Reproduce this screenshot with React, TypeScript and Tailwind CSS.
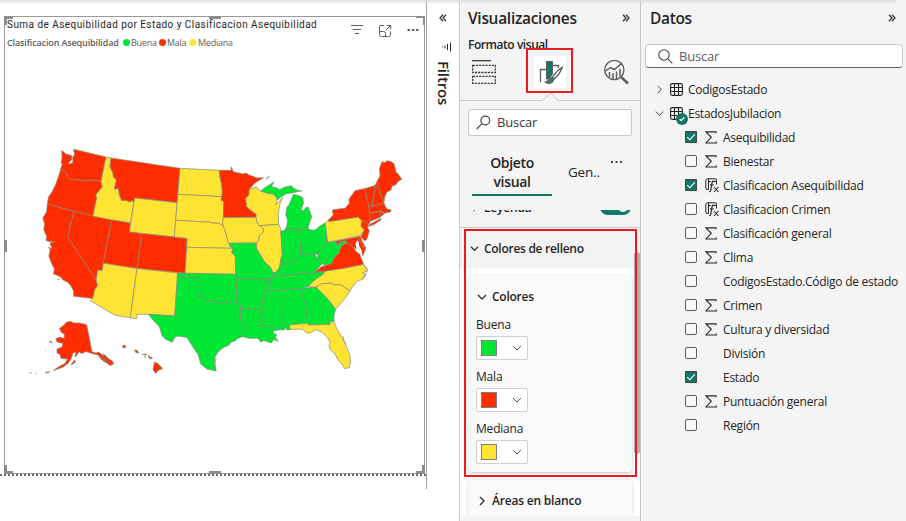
import React from "react";

const RED = "#ff2d00";
const GREEN = "#00e635";
const YELLOW = "#ffe433";

type Shape = { id: string; fill: string; d: string };

const STATES: Shape[] = [
  { id: "WA", fill: RED, d: "M61.7 150.5L66 154L71.5 155.5L71.5 160L68.5 163L69.5 164.5L73 162L72.5 157L74.5 155L73.7 149.2L106 157L101 181.7L97 180.6L90 180L84 180.8L76.5 179.6L71 179.5L67.5 178L66.3 173L63 170.5L60.7 168.5L62.5 164L61 163L62 158Z" },
  { id: "OR", fill: RED, d: "M60.7 168.5L63 170.5L66.3 173L67.5 178L71 179.5L76.5 179.6L84 180.8L90 180L97 180.6L101 181.7L102.3 186.7L99 191L95.7 195L97 198L96.3 200L93 216.3L73.7 211.3L47.3 204L48.5 197L52 192L55.5 185L58.3 176.7L60 172Z" },
  { id: "CA", fill: RED, d: "M47.3 204L73.7 211.3L67.7 237L96.3 280L97.7 285.7L95 289L94 293L92.7 298.5L73.7 296.3L73.5 291L71 286L67.5 282L63 280L60 276.5L53.5 274L54.3 269L51 262L48.8 256L50.3 250L48.5 247L52 249L50 243L54.5 242L49 241.5L46.2 240.5L46.5 236L43.8 230L44.5 224L42.8 218L46.5 212Z" },
  { id: "NV", fill: RED, d: "M73.7 211.3L111.7 220L103.3 263.3L102.3 270.7L97.7 270L97 275L96.3 280L67.7 237Z" },
  { id: "ID", fill: YELLOW, d: "M106 157L111 158L110 166.7L113 173L113.5 177L116.5 180L114.3 189L118.3 188.5L119.5 195L121.7 200.5L126.5 200.3L129 202L132 200.7L134 201.5L130.3 223L93 216.3L96.3 200L97 198L95.7 195L99 191L102.3 186.7L101 181.7Z" },
  { id: "MT", fill: RED, d: "M111 158L180 168.3L177 202.7L134.7 198L134 201.5L132 200.7L129 202L126.5 200.3L121.7 200.5L119.5 195L118.3 188.5L114.3 189L116.5 180L113.5 177L113 173L110 166.7Z" },
  { id: "WY", fill: YELLOW, d: "M134.7 198L177 202.7L174.3 237L129.3 232Z" },
  { id: "UT", fill: RED, d: "M111.7 220L130.3 223L129.3 232L141.7 233.6L137 268.5L103.3 263.3Z" },
  { id: "CO", fill: RED, d: "M141.7 233.6L187 238.3L185 273.3L137 268.5Z" },
  { id: "AZ", fill: YELLOW, d: "M103.3 263.3L137 268.5L130.3 317.7L115.3 315.3L90.3 300.7L92.7 298.5L94 293L95 289L97.7 285.7L96.3 280L97.7 270L102.3 270.7Z" },
  { id: "NM", fill: YELLOW, d: "M137 268.5L177.7 273L174.7 316L148.3 314.3L136.7 314.3L136.7 318.7L130.3 317.7Z" },
  { id: "ND", fill: YELLOW, d: "M180 168.3L219.3 170.3L220 176.7L221.5 184L222.3 190L222 196.7L178 194.3Z" },
  { id: "SD", fill: YELLOW, d: "M178 194.3L222 196.7L221 200L223.7 201.7L223.3 217.7L222.7 221.7L223.3 226L219.3 223.7L215 222.7L213 223.5L210.7 222.3L175.7 220.3Z" },
  { id: "NE", fill: YELLOW, d: "M175.7 220.3L210.7 222.3L213 223.5L215 222.7L219.3 223.7L223.3 226L226 233.3L228 241.7L230.7 248.3L187 247.3L187 238.3L174.3 237Z" },
  { id: "KS", fill: YELLOW, d: "M187 247.3L230.7 248.3L232.7 250L231.7 252.7L235.3 256L235.7 274.3L185 273.3Z" },
  { id: "OK", fill: GREEN, d: "M177.7 273.1L185 273.3L235.7 274.3L236 279.3L237.3 303.3L230 302L226 303.3L221.7 302.3L217 303L213.3 301.6L206.7 300.5L202 297L197.7 295L197.7 278.3L177.4 277.3Z" },
  { id: "TX", fill: GREEN, d: "M177.4 277.3L197.7 278.3L197.7 295L202 297L206.7 300.5L213.3 301.6L217 303L221.7 302.3L226 303.3L230 302L237.3 303.3L240.7 304.3L240.7 319L244.3 327.3L242.7 336.7L237 338.7L235 341L231 342L229 345L223.5 347.5L218 352L215 357L214.3 362L216 371L207 369L200.7 364L198.3 355L192.7 346.7L187 337.5L178 336L175 337L172.3 342.3L166 339.5L162.3 336L159.3 326.7L153 320L148.3 314.3L174.7 316Z" },
  { id: "MN", fill: RED, d: "M219.3 170.3L231 170.3L231.3 166.8L233.3 171.7L239 173L243 174L246 173L249 175L252 176L257 178L263.5 177.7L255 183L249.3 189.3L249 195L245.7 198.3L246.7 206.7L251 210.5L256 214L256 217.3L223.3 217.7L223.7 201.7L221 200L222 196.7L222.3 190L221.5 184L220 176.7Z" },
  { id: "IA", fill: YELLOW, d: "M223.3 217.7L256 217.3L256.7 222L259.3 225.7L263.3 228.5L263.5 232L259 236L259 240L256.7 243L229.3 243.3L228 241.7L226 233.3L223.3 226L222.7 221.7Z" },
  { id: "MO", fill: GREEN, d: "M229.3 243.3L256.7 243L256.5 248L260 254L263.3 260L266 263L270.7 267.3L273.3 273L271.7 277.3L270 282.7L266 283L268 278.4L236 279.3L235.3 256L231.7 252.7L232.7 250Z" },
  { id: "AR", fill: GREEN, d: "M236 279.3L268 278.4L266 283L270 282.7L268 288L265 294L262.7 300L261.7 309.3L241 309.3L240.7 304.3L237.3 303.3Z" },
  { id: "LA", fill: GREEN, d: "M241 309.3L261.7 309.3L262.3 315L259 326L272.7 326L274 330.7L273 333L277 335L275 337L278.6 341.5L274 339.5L271 343L267 341.5L264 340.5L261 342L257.5 338L250 338.4L242.7 336.7L244.3 327.3L240.9 319Z" },
  { id: "WI", fill: YELLOW, d: "M249.3 189.3L256.7 187L258 189.5L260.7 191L267 193L273 194L276 197L277 201L275.5 205L279 201.5L282.7 197.5L280 204L278.3 214L278.7 224.3L259.3 225.7L256.7 222L256 214L251 210.5L246.7 206.7L245.7 198.3L249 195Z" },
  { id: "IL", fill: YELLOW, d: "M259.3 225.7L278.7 224.3L280.7 229L282.3 255L280.5 261L279 268.3L276 272L273.3 273L270.7 267.3L266 263L263.3 260L260 254L256.5 248L256.7 243L259 240L259 236L263.5 232L263.3 228.5Z" },
  { id: "MIU", fill: GREEN, d: "M260.7 191L265 187.5L270 184.5L274 181.7L271.5 186.5L275.5 187.5L280 189.5L285 187L291.7 185.8L293 188L297 190L301.7 191L296 192L292 193L287 193.5L283.3 195.5L279.5 198L278 200L276 197L273 194L267 193Z" },
  { id: "MI", fill: GREEN, d: "M285 230L287 225L287.5 220L285.8 215L286.5 208L289.5 204L291 200L293.3 194.5L297 195L302.7 197.5L303.5 203L301 209.5L303 211L306 207.5L308.5 207.5L311.7 216.7L309.8 222L308 228.5L298.7 229Z" },
  { id: "IN", fill: GREEN, d: "M280.7 231.2L285 230L298.7 229L301 253.5L297 257L293 262L289 263L284 264L280.5 264.5L280.5 261L282.3 255Z" },
  { id: "OH", fill: GREEN, d: "M298.7 229L308 228.5L311 230L315 230L320 226L325.3 222.9L327.3 236.7L326 244L320 250.5L318 255L315 253.5L309 255L305 255L301 253.5Z" },
  { id: "KY", fill: GREEN, d: "M301 253.5L305 255L309 255L315 253.5L317 259L321.7 264L315 272.3L280 275.7L271.7 277.3L273.3 273L276 272L279 268.3L280.5 264.5L284 264L289 263L293 262L297 257Z" },
  { id: "TN", fill: GREEN, d: "M271.7 277.3L280 275.7L315 272.3L325.7 271L323 274.5L316.7 278.5L312 282.5L308.3 286.7L300.7 288.5L267 291.3L268 288L270 282.7Z" },
  { id: "MS", fill: GREEN, d: "M267 291.3L281.7 290.3L282 329.8L278 330L274 330.7L272.7 326L259 326L262.3 315L261.7 309.3L262.7 300L265 294Z" },
  { id: "AL", fill: GREEN, d: "M281.7 290.3L300.7 288.5L304.5 302L306.5 310L307.7 323.3L289 325L290.5 329.5L287 330L285.5 327L284.5 330L282 329.8Z" },
  { id: "GA", fill: GREEN, d: "M300.7 288.5L316 287.1L320 291L326.7 297.5L331 303L335.7 309.3L334 315L334 321.7L330 321.8L330 324.5L308.5 325L307.7 323.3L306.5 310L304.5 302Z" },
  { id: "FL", fill: YELLOW, d: "M289 325L307.7 323.3L308.5 325L330 324.5L330 321.8L334 321.7L336.5 328L341 336L343.5 340L346 346L350 355L350.5 362L349.3 367.7L344.3 368.5L342 364L338 360L335 354L330.5 350L329 346L330 342L327 337L321.7 332L316 329.5L311 332.5L306.7 333.3L304 330L300 329L290.5 329.5Z" },
  { id: "SC", fill: YELLOW, d: "M316 287.1L321.7 283.6L331.7 283L333.5 284.6L340.7 284.7L350 290.7L346 297L341 303L335.7 309.3L331 303L326.7 297.5L320 291Z" },
  { id: "NC", fill: YELLOW, d: "M325.7 271L345 268L363.5 264.3L367.3 270.7L362 273L366 274.5L362.5 279.5L357 281L353 286L350 290.7L340.7 284.7L333.5 284.6L331.7 283L321.7 283.6L316 287.1L308.3 286.7L312 282.5L316.7 278.5L323 274.5Z" },
  { id: "VA", fill: RED, d: "M315 272.3L321.7 266.5L327 265L331.7 263L335 256L339 253L340.5 247L346 242L350 244.5L354 248L356 251.5L360 254L361 258L362.5 261L363.5 264.3L345 268L325.7 271Z" },
  { id: "WV", fill: GREEN, d: "M327 238L327.7 242.3L336 241L337.3 245L341 241.5L346 240.7L347.3 243.3L343 244L340.5 247L339 253L335 256L331.7 263L327 265L321.7 264L317 259L318 255L320 250.5L326 244Z" },
  { id: "MD", fill: RED, d: "M336 241L358.5 236.7L361.7 243L362.5 247L366 247L365 251L362.5 256L360 250L358 244L357 240L356 243L357 249L353 247L350 244.5L347.3 243.3L346 240.7L341 241.5L337.3 245Z" },
  { id: "DE", fill: RED, d: "M358.5 236.7L360.5 236L361.5 240L365 246.7L362.5 247Z" },
  { id: "PA", fill: YELLOW, d: "M325.3 222.9L328.3 220L329 221.5L358.3 217L362 220.7L361 226L364.3 230L360.5 235.5L327.7 242.3Z" },
  { id: "NJ", fill: RED, d: "M362 220.7L368.5 223L367.5 227L369.3 231L366.7 239.5L364.5 241L361 236.5L364.3 230L361 226Z" },
  { id: "NY", fill: RED, d: "M328.3 220L333.3 215L332.3 210L340 208.8L345 208.3L349.3 203.3L349 199L355 190.7L365 188.5L366.7 198.3L369 206.5L369.5 214L370 222L369 224.2L362 220.7L358.3 217L329 221.5Z" },
  { id: "LI", fill: RED, d: "M368.8 225L375 221.5L380.7 218.3L379 221L381.5 219.5L374 224.5L368.5 226.5Z" },
  { id: "VT", fill: RED, d: "M365 188.5L375 185.5L375 191L373 199L372.5 206L369 206.5L366.7 198.3Z" },
  { id: "NH", fill: RED, d: "M375 185.5L376.7 182.3L380.5 194L384 201.5L382 204L372.5 206L373 199L375 191Z" },
  { id: "ME", fill: RED, d: "M376.7 182.3L380 176L379.5 168.5L382 161.7L384.5 162.5L387.5 160.7L391 161.5L394 163.5L396 172L398.5 174.5L401.7 179.3L398 181.5L395.5 185L392 186L391 190L387 192L385 196L384 201.5L380.5 194Z" },
  { id: "MA", fill: RED, d: "M369 206.5L382 204L384 202.5L385 206L387 209L391 209.8L390.5 212L387 212.5L385 213.5L381.5 211L369.5 213.5Z" },
  { id: "CT", fill: RED, d: "M369.5 213.5L380 211.5L380.5 217L370 221.5Z" },
  { id: "RI", fill: RED, d: "M380 211.5L381.5 211L384 214L380.5 217Z" },
  { id: "AK", fill: RED, d: "M59.5 328.5L64 325L66 322.5L70 321.3L74 323L80 323L86.7 324.8L92 351.8L96 353L99 352L102 355L105 355L109 359L112.5 361L113.5 364L110 365.5L107 363L104 361.5L101 359L98 355L92 353.5L86 351.5L82 353.5L79 352L76.5 355.5L75 357L76 352L73 353L71 359L68 363.5L63 367L58 369L53.5 370.5L59 366.5L65 363.5L67.5 359L61 358.5L60 354.5L57 353L57 349L62 347L63 343.5L57 342L56 338.5L60 337L64 338.5L64.5 334.5L61 332Z" },
  { id: "AK2", fill: RED, d: "M71 364.5L74.5 360L75.5 362L73 364Z M49 341L52 342L51.5 343.2Z M45.5 372.2L50 371.7L46 373.2Z M35 373.5L36.5 373.5 M29 373L32 373 M45 350L46 350.5" },
  { id: "HI", fill: RED, d: "M122 346.8L124 345L126 346L125 347.8L123 347.8Z M134.5 350L137 350.3L139 353L136 352.8Z M142 354.5L146 354L147 355Z M144.5 356L146 357.5L145 357Z M148 355.5L150.5 357L152.5 358L150 359Z M154.5 362L158 363.5L162.5 368.5L158 370.5L155.5 373.5L153 369.5Z" },
  { id: "IR", fill: GREEN, d: "M266 179L269.5 176L268 178Z" },
  { id: "CI", fill: RED, d: "M57 279.2L60 279.5 M367.8 205L368.5 205.5" },
  { id: "KEYS", fill: "none", d: "M216 371.5L215 365L216 358 M363.5 264.3L368 270L362.5 278.5 M343 336L344 341L346.5 344.5 M101 353.5L107 362 M103 353L110 363 M99 355L108 364 M104 357L101 359" },
];

function UsMap() {
  return (
    <svg className="block" width="419" height="396" viewBox="5 53 419 396">
      {STATES.map((s) => (
        <path key={s.id} d={s.d} fill={s.fill} stroke="#8c8a78" strokeWidth="0.7" strokeLinejoin="round" />
      ))}
      <path d="M357.5 241L358.5 246L361 251L361.5 256M356 243.5L357.5 248.5M358.5 252L362 254" fill="none" stroke="#fff" strokeWidth="1.5" />
    </svg>
  );
}

function Chevron({ dir, size = 10, color = "#333", w = 1.2 }: { dir: "down" | "right"; size?: number; color?: string; w?: number }) {
  return (
    <svg width={size} height={size} viewBox="0 0 10 10" fill="none" stroke={color} strokeWidth={w} className="shrink-0">
      <path d={dir === "down" ? "M1 3L5 7L9 3" : "M3 1L7 5L3 9"} />
    </svg>
  );
}

function DoubleChevron({ left = false }: { left?: boolean }) {
  return (
    <svg width="8" height="8" viewBox="0 0 8 8" fill="none" stroke="#3a3a3a" strokeWidth="1.3" className={left ? "rotate-180" : ""}>
      <path d="M1 .7L4 4L1 7.3M4 .7L7 4L4 7.3" />
    </svg>
  );
}

function TableIcon() {
  return (
    <svg width="13" height="13" viewBox="0 0 13 13" fill="none" stroke="#252423" strokeWidth="1.1">
      <rect x=".6" y=".6" width="11.8" height="11.8" rx="1.8" />
      <path d="M.6 4.5H12.4M.6 8.5H12.4M4.5 .6V12.4M8.5 .6V12.4" />
    </svg>
  );
}

function Sigma() {
  return (
    <svg width="12" height="13" viewBox="0 0 12 13" fill="none" stroke="#252423" strokeWidth="1.1">
      <path d="M11 2.3V.9H1L6.3 6.3L1 12H11.3V10.5" />
    </svg>
  );
}

function FxIcon() {
  return (
    <svg width="15" height="15" viewBox="0 0 15 15" fill="none" stroke="#252423" strokeWidth="1">
      <path d="M4 11.5H2.3Q.8 11.5 .8 10V2.3Q.8 .8 2.3 .8H10Q11.5 .8 11.5 2.3V6.5M3.5 .8V11.5M3.5 3.5H6M8 3.5H11.5" />
      <path d="M9 3.3Q7.4 2.8 7 5L5.8 12Q5.5 14 4 13.7M4.8 7H8.8" strokeWidth="1.2" />
      <path d="M9 9L13.5 14M13.5 9L9 14" strokeWidth="1.1" />
    </svg>
  );
}

function Check({ on }: { on?: boolean }) {
  return on ? (
    <span className="-mt-px flex size-3 items-center justify-center rounded-[1px] bg-[#117865] outline outline-1 -outline-offset-1 outline-[#444]">
      <svg width="10" height="10" viewBox="0 0 10 10" fill="none" stroke="#fff" strokeWidth="1.1">
        <path d="M1.2 5.2L3.8 7.7L8.8 2.4" />
      </svg>
    </span>
  ) : (
    <span className="-mt-px size-3 rounded-[2px] border border-[#5c5c5c] bg-[#f8f8f8]" />
  );
}

type Field = { name: string; icon?: "sum" | "fx"; on?: boolean };
const FIELDS: Field[] = [
  { name: "Asequibilidad", icon: "sum", on: true },
  { name: "Bienestar", icon: "sum" },
  { name: "Clasificacion Asequibilidad", icon: "fx", on: true },
  { name: "Clasificacion Crimen", icon: "fx" },
  { name: "Clasificación general", icon: "sum" },
  { name: "Clima", icon: "sum" },
  { name: "CodigosEstado.Código de estado" },
  { name: "Crimen", icon: "sum" },
  { name: "Cultura y diversidad", icon: "sum" },
  { name: "División" },
  { name: "Estado", on: true },
  { name: "Puntuación general", icon: "sum" },
  { name: "Región" },
];

const HANDLES = [
  "left-[-1px] top-[-1px] h-[3px] w-[9px]",
  "left-[-1px] top-[-1px] h-[9px] w-[3px]",
  "left-[204px] top-[-1px] h-[3px] w-[12px]",
  "right-[-1px] top-[-1px] h-[2px] w-[9px]",
  "right-[-1px] top-[-1px] h-[9px] w-[2px]",
  "left-[-1px] top-[223px] h-[12px] w-[3px]",
  "right-[-1px] top-[223px] h-[12px] w-[3px]",
  "bottom-[-1px] left-[-1px] h-[3px] w-[9px]",
  "bottom-[-1px] left-[-1px] h-[9px] w-[3px]",
  "bottom-[-1px] left-[204px] h-[3px] w-[12px]",
  "bottom-[-1px] right-[-1px] h-[3px] w-[9px]",
  "bottom-[-1px] right-[-1px] h-[9px] w-[3px]",
];

function Canvas() {
  return (
    <section className="w-[427px] shrink-0 bg-white">
      <div className="h-[489px] border-r border-[#a3a3a3]">
        <div className="h-[16px]" />
        <div className="relative ml-[4px] h-[458px] w-[421px] border border-[#9a9a9a]">
          <div className="flex h-[36px] justify-between pl-[2px]">
            <div className="whitespace-nowrap">
              <div className="mt-px h-[14px] font-['Roboto',sans-serif] text-[10px] leading-[14px] tracking-[0.45px] text-[#252423]">
                Suma de Asequibilidad por Estado y Clasificacion Asequibilidad
              </div>
              <div className="mt-[4px] flex h-[13px] items-center text-[9px] leading-[13px] tracking-[-0.25px] text-[#605e5c]">
                <b className="w-[116px] text-[9px] font-semibold tracking-[-0.13px]">Clasificacion Asequibilidad</b>
                <i className="mr-[1px] size-[7px] rounded-full bg-[#00e635]" />
                <span className="w-[28px]">Buena</span>
                <i className="mr-[1px] size-[7px] rounded-full bg-[#ff2d00]" />
                <span className="w-[22px]">Mala</span>
                <i className="mr-[2px] size-[7px] rounded-full bg-[#ffe433]" />
                <span>Mediana</span>
              </div>
            </div>
            <svg width="72" height="24" viewBox="350 17 72 24" fill="none" stroke="#605e5c" strokeWidth="1" className="mr-[2px] shrink-0">
              <path d="M351 25.5H363M353 29.5H361M355 33.5H359" />
              <path d="M384 25.5H381Q379.5 25.5 379.5 27V34.5Q379.5 36.5 381.5 36.5H388.5Q390.5 36.5 390.5 34.5V31.5M379.5 31.5H383.5Q385.5 31.5 385.5 33.5V36.5M386 30L391 25M387 25.5H390.7V29.5" />
              <path d="M407.5 30H418.5" strokeWidth="2.2" strokeDasharray="2.5 1.8" />
            </svg>
          </div>
          <UsMap />
          {HANDLES.map((h) => (
            <span key={h} className={"absolute bg-[#8c8c8c] " + h} />
          ))}
        </div>
        <div className="w-[426px] border-t-2 border-dotted border-[#6b6b6b]" />
      </div>
    </section>
  );
}

function FiltersRail() {
  return (
    <section className="flex w-[32px] shrink-0 flex-col items-center bg-white pt-[14px]">
      <DoubleChevron left />
      <svg width="9" height="10" viewBox="0 0 9 10" fill="none" stroke="#252423" strokeWidth="1" className="mt-[20px] ml-[6px]">
        <path d="M8.5 .5V9.5M5.5 2V8M3 3.5V6.5M.7 4.5V5.5" />
      </svg>
      <div className="mt-[9px] ml-[2px] h-[48px] text-[15px] leading-[20px] font-semibold tracking-[-0.15px] text-[#252423] [writing-mode:vertical-rl]">Filtros</div>
    </section>
  );
}

function ColorPick({ label, box }: { label: string; box: string }) {
  return (
    <div className="h-[52px]">
      <div className="h-[21px] text-[12px] leading-[19px] tracking-[-0.2px]">{label}</div>
      <div className="flex h-[24px] w-[52px] items-center justify-between rounded-[2px] border border-[#d1d1d1] bg-white pr-[5px] pl-[4px]">
        <span className={"size-4 border border-[#808080] " + box} />
        <Chevron dir="down" color="#4a6076" w={1} />
      </div>
    </div>
  );
}

function Visualizations() {
  return (
    <section className="relative flex w-[182px] shrink-0 flex-col border-x border-[#c8c8c8] bg-[#f4f4f4] text-[#252423]">
      <header className="flex h-[36px] items-center justify-between pr-[10px] pl-[8px]">
        <h1 className="text-[15.5px] leading-[20px] font-semibold tracking-[-0.3px]">Visualizaciones</h1>
        <DoubleChevron />
      </header>
      <div className="h-[17px] pl-[8px] text-[12px] leading-[17px] font-semibold tracking-[-0.45px]">Formato visual</div>
      <div className="flex h-[47px] justify-between pt-[3px] pr-[11px] pl-[12px]">
        <svg width="24" height="32" viewBox="0 0 24 32" fill="none" stroke="#3b3a39" strokeWidth="1.3">
          <path d="M0 4.7H19" />
          <path d="M.7 9.3H23.3V16.5H.7ZM.7 20.3H23.3V27.3H.7Z" strokeDasharray="2.2 1" />
        </svg>
        <div className="size-[32px] bg-white">
          <svg width="32" height="32" viewBox="0 0 32 32" fill="none">
            <path d="M6.5 26V13.5H12M19 9.5H24.5V12" stroke="#605e5c" strokeWidth="1.3" />
            <path d="M12.5 5.5H18.5V23H12.5Z" fill="#117865" stroke="#605e5c" strokeWidth="1" />
            <path d="M28.5 11.5Q23 14 19 20.5L16 25L20 22.5Q26 18 28.5 11.5Z" fill="#fff" stroke="#fff" strokeWidth="3" />
            <path d="M28.3 11.3Q23 14.5 18.5 21L20.5 22.8Q26 18 28.3 11.3Z" fill="#fff" stroke="#555" strokeWidth="1.2" />
            <path d="M10 25.5Q13.5 25 14 23Q15.5 20.5 18.5 21L20.5 22.8Q20 28 14 28Q11.5 27.7 10 25.5Z" fill="#4f6f68" />
          </svg>
        </div>
        <svg width="26" height="32" viewBox="0 0 26 32" fill="none" stroke="#605e5c" strokeWidth="1.4">
          <circle cx="11.3" cy="14" r="9.6" />
          <path d="M18 21L25 27.5" strokeWidth="2.4" />
          <path d="M2.5 15L7.5 11.5L11.5 13.5L19 7M6.5 21.5V16M10 23V17M13.5 23V15.5M17 20.5V13" strokeWidth="1.5" />
        </svg>
      </div>
      <svg width="180" height="9" viewBox="0 0 180 9" fill="none" stroke="#c8c8c8" className="-mt-[7px] block">
        <path d="M0 7.5H82L90.5 .5L98.5 7.5H180" />
      </svg>
      <div className="mx-[8px] mt-[7px] flex h-[27px] shrink-0 items-center rounded-[2px] border border-[#c8c8c8] bg-white pl-[7px] text-[13px] tracking-[-0.2px] text-[#3b3a39]">
        <svg width="15" height="15" viewBox="0 0 15 15" fill="none" stroke="#484644" strokeWidth="1.2" className="mr-[6px]">
          <circle cx="9.3" cy="5.5" r="4.4" />
          <path d="M6 8.7L.7 14" />
        </svg>
        <span className="pt-px">Buscar</span>
      </div>
      <div className="flex h-[74px] shrink-0 pt-[17px] pl-[12px]">
        <div className="h-[43px] w-[80px] border-b-2 border-[#117865] text-center text-[14px] leading-[19px] font-semibold tracking-[-0.35px]">
          Objeto
          <br />
          visual
        </div>
        <div className="ml-[16px] pt-[9px] text-[13.5px] leading-[20px] tracking-[-0.2px]">Gen..</div>
        <svg width="12" height="4" viewBox="0 0 12 4" className="mt-[7px] ml-[11px]" fill="#33475b">
          <path d="M0 1H2V3H0ZM4.5 1H6.5V3H4.5ZM9 1H11V3H9Z" />
        </svg>
      </div>
      <div className="flex h-[18px] shrink-0 items-start justify-between overflow-hidden border-b border-[#c8c8c8] pr-[9px] pl-[11px]">
        <div className="-mt-[10px] flex items-center gap-[5px] text-[12px] leading-[16px] font-semibold tracking-[-0.2px]">
          <Chevron dir="right" size={8} />
          Leyenda
        </div>
        <span className="-mt-[11px] flex h-[16px] w-[31px] items-center justify-end rounded-full bg-[#117865] pr-[3px]">
          <i className="size-[10px] rounded-full bg-white" />
        </span>
      </div>
      <div className="flex h-[288px] shrink-0 flex-col overflow-hidden bg-white">
        <div className="flex h-[40px] shrink-0 items-center gap-[5px] bg-[#f3f3f3] pt-px pl-[10px] text-[12px] font-semibold tracking-[-0.28px]">
          <Chevron dir="down" size={9} w={1.4} />
          Colores de relleno
        </div>
        <div className="mx-[8px] mt-[7px] flex h-[197px] shrink-0 flex-col rounded-[4px] bg-[#fafafa] px-[8px] shadow-[0_1px_3px_rgba(0,0,0,0.25)]">
          <div className="flex h-[40px] shrink-0 items-center gap-[5px] pt-[4px] pl-[1px] text-[12px] font-semibold tracking-[-0.25px]">
            <Chevron dir="down" size={10} w={1.4} />
            Colores
          </div>
          <ColorPick label="Buena" box="bg-[#00e635]" />
          <ColorPick label="Mala" box="bg-[#ff2d00]" />
          <ColorPick label="Mediana" box="bg-[#ffe433]" />
        </div>
        <div className="mx-[8px] mt-[8px] flex h-[60px] shrink-0 rounded-[4px] bg-[#fafafa] shadow-[0_0_3px_rgba(0,0,0,0.2)]">
          <div className="flex h-[42px] items-center gap-[5px] pl-[9px] text-[12px] font-semibold tracking-[-0.2px]">
            <Chevron dir="right" size={10} w={1.4} />
            Áreas en blanco
          </div>
        </div>
      </div>
      <span className="absolute top-[252px] right-0 h-[202px] w-[6px] rounded-[3px] bg-[#b0b0b0]" />
      <span className="absolute top-[229px] left-[4px] h-[248px] w-[173px] border-2 border-[#e81c1c]" />
      <span className="absolute top-[48px] left-[66px] h-[45px] w-[47px] border-2 border-[#e81c1c]" />
    </section>
  );
}

function DataPane() {
  return (
    <section className="flex-1 bg-[#f4f4f4] text-[#252423]">
      <header className="flex h-[36px] items-center justify-between pr-[10px] pl-[9px]">
        <h1 className="text-[15.5px] leading-[20px] font-semibold tracking-[-0.35px]">Datos</h1>
        <DoubleChevron />
      </header>
      <div className="mt-[8px] mr-[3px] ml-[4px] flex h-[24px] items-center rounded-[4px] border border-[#c8c8c8] border-b-[#616161] bg-white pl-[12px] text-[13px] tracking-[-0.2px] text-[#605e5c]">
        <svg width="15" height="15" viewBox="0 0 15 15" fill="none" stroke="#484644" strokeWidth="1.1" className="mr-[6px]">
          <circle cx="6" cy="6" r="5.2" />
          <path d="M9.8 9.8L14.3 14.3" />
        </svg>
        <span className="pt-px">Buscar</span>
      </div>
      <div className="mt-[9px] text-[12px] tracking-[-0.26px] whitespace-nowrap">
        <div className="flex h-[24px] items-center pl-[14px]">
          <Chevron dir="right" size={9} w={1} />
          <span className="mr-[5px] ml-[6px]">
            <TableIcon />
          </span>
          <span className="pt-px">CodigosEstado</span>
        </div>
        <div className="flex h-[24px] items-center pl-[14px]">
          <Chevron dir="down" size={9} w={1} />
          <span className="relative mr-[5px] ml-[6px]">
            <TableIcon />
            <span className="absolute top-[6px] left-[6px] flex size-[12px] items-center justify-center rounded-full bg-[#117865]">
              <svg width="6" height="6" viewBox="0 0 6 6" fill="none" stroke="#fff" strokeWidth="1.3">
                <path d="M.7 3.2L2.2 4.6L5.3 1.5" />
              </svg>
            </span>
          </span>
          <span className="pt-px">EstadosJubilacion</span>
        </div>
        {FIELDS.map((f) => (
          <div key={f.name} className="flex h-[24px] items-center pl-[44px]">
            <Check on={f.on} />
            <span className="ml-[8px] flex w-[18px] items-center">{f.icon === "sum" ? <Sigma /> : f.icon === "fx" ? <FxIcon /> : null}</span>
            <span className="pt-[2px]">{f.name}</span>
          </div>
        ))}
      </div>
    </section>
  );
}

export default function App() {
  return (
    <main className="relative flex h-[521px] w-[906px] overflow-hidden bg-white font-['Open_Sans','Noto_Sans',sans-serif]">
      <Canvas />
      <FiltersRail />
      <Visualizations />
      <DataPane />
      <span className="absolute top-0 left-0 h-[4px] w-[896px] bg-gradient-to-b from-[#dcdcdc] to-transparent" />
    </main>
  );
}
